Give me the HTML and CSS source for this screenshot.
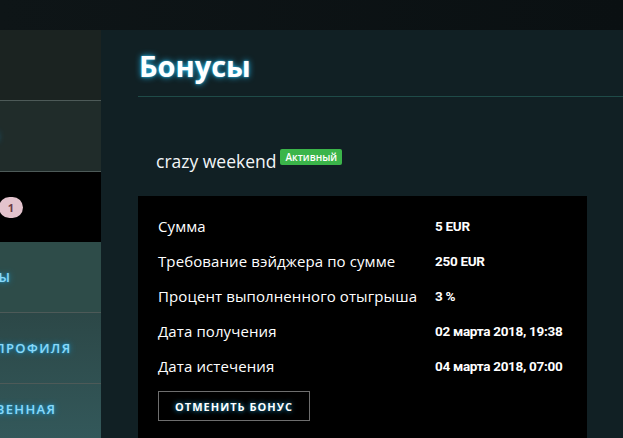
FILE: index.html
```html
<!DOCTYPE html>
<html lang="ru">
<head>
  <meta charset="UTF-8">
  <meta name="viewport" content="width=device-width, initial-scale=1.0">
  <title>Бонусы</title>
  <link rel="stylesheet" href="styles.css">
</head>
<body>
  <div class="topbar"></div>
  <div class="layout">
    <!-- Side menu (partly off screen) -->
    <div class="sidebar">
      <div class="sidebar-inner">
        <div class="side-item side-top"></div>
        <div class="side-item side-dim"><span class="side-link">ИГРЫ</span></div>
        <div class="side-item side-active">
          <span class="side-link">ПОЧТА</span>
          <span class="count">1</span>
        </div>
        <div class="side-item side-plain"><span class="side-link">БОНУСЫ</span></div>
        <div class="side-item side-profile"><span class="side-link">НАСТРОЙКИ ПРОФИЛЯ</span></div>
        <div class="side-item side-last"><span class="side-link">ОТВЕТСТВЕННАЯ</span></div>
      </div>
    </div>

    <!-- Main content -->
    <div class="main">
      <div class="page-head">
        <h1>Бонусы</h1>
      </div>

      <div class="bonus-name">
        crazy weekend<span class="status">Активный</span>
      </div>

      <div class="bonus-box">
        <div class="bonus-row">
          <div class="bonus-label">Сумма</div>
          <div class="bonus-value">5 EUR</div>
        </div>
        <div class="bonus-row">
          <div class="bonus-label">Требование вэйджера по сумме</div>
          <div class="bonus-value">250 EUR</div>
        </div>
        <div class="bonus-row">
          <div class="bonus-label">Процент выполненного отыгрыша</div>
          <div class="bonus-value">3 %</div>
        </div>
        <div class="bonus-row">
          <div class="bonus-label">Дата получения</div>
          <div class="bonus-value">02 марта 2018, 19:38</div>
        </div>
        <div class="bonus-row">
          <div class="bonus-label">Дата истечения</div>
          <div class="bonus-value">04 марта 2018, 07:00</div>
        </div>
        <button class="cancel-btn">Отменить бонус</button>
      </div>
    </div>
  </div>
</body>
</html>
```

FILE: styles.css
```css
body {
  margin: 0;
  height: 100vh;
  overflow: hidden;
  background-color: #0b1113;
  font-family: "Open Sans", sans-serif;
  color: #fff;
}
.topbar {
  height: 30px;
  background: linear-gradient(to right, #0e1517, #0a1012);
}
.layout {
  display: flex;
  height: 408px;
}

/* Sidebar */
.sidebar {
  width: 101px;
  overflow: hidden;
  flex-shrink: 0;
  background: linear-gradient(to bottom, #1b2321 0%, #243532 35%, #33585a 100%);
}
.sidebar-inner {
  width: 244px;
  margin-left: -143px;
}
.side-item {
  height: 70px;
  box-sizing: border-box;
  display: flex;
  align-items: center;
  justify-content: center;
  border-bottom: 1px solid #4d5a58;
  text-align: center;
}
.side-top {
  height: 71px;
  background-color: #1b2321;
}
.side-dim {
  height: 71px;
  background-color: #202c2a;
}
.side-active {
  background-color: #000;
  border-bottom: none;
  gap: 6px;
  padding-left: 6px;
}
.side-plain {
  height: 71px;
  background-color: #2e4c49;
}
.side-profile {
  height: 71px;
  padding-left: 10px;
}
.side-last {
  border-bottom: none;
  align-items: flex-start;
  padding: 16px 0 0 28px;
}
.side-link {
  font-family: "Open Sans", sans-serif;
  font-size: 13px;
  font-weight: 600;
  line-height: 19px;
  letter-spacing: 1.4px;
  color: #8ad8f8;
  text-shadow: 0 0 6px #168fc4, 0 0 2px #1f9bd0;
}
.side-active .side-link {
  color: #000;
  text-shadow: none;
}
.count {
  display: inline-block;
  padding: 2px 9px;
  border-radius: 11px;
  background-color: #e3c3cd;
  color: #6b3b45;
  font-size: 11px;
  font-weight: 700;
  line-height: 17px;
}

/* Main */
.main {
  flex: 1;
  background-color: #112024;
  padding-left: 37px;
}
.page-head {
  border-bottom: 1px solid #1f4b48;
  padding: 18px 0 12px 1px;
}
h1 {
  margin: 0;
  font-family: "Open Sans", sans-serif;
  font-size: 29px;
  line-height: 36px;
  font-weight: 700;
  color: #fff;
  text-shadow: 0 0 6px #22b6ea, 0 0 2px #3cc4f0;
}
.bonus-name {
  padding: 52px 0 0 18px;
  height: 47px;
  font-size: 17.5px;
  line-height: 20px;
  color: #f2f6f8;
}
.status {
  display: inline-block;
  vertical-align: 7px;
  margin-left: 4px;
  padding: 0 5px;
  height: 16px;
  line-height: 16px;
  border-radius: 2px;
  background-color: #3bb54a;
  color: #fff;
  font-size: 10px;
  font-weight: 600;
}
.bonus-box {
  width: 449px;
  box-sizing: border-box;
  background-color: #000;
  padding: 12px 20px 20px;
  height: 260px;
}
.bonus-row {
  display: grid;
  grid-template-columns: 277px auto;
  align-items: center;
  height: 35px;
}
.bonus-label {
  font-size: 15px;
  letter-spacing: 0.1px;
  color: #fff;
}
.bonus-value {
  font-family: Roboto, sans-serif;
  font-size: 13.5px;
  font-weight: 700;
  letter-spacing: -0.3px;
  color: #fff;
}
.cancel-btn {
  margin-top: 8px;
  width: 152px;
  height: 30px;
  background-color: transparent;
  border: 1px solid #6e6e6e;
  color: #fff;
  font-family: "Open Sans", sans-serif;
  font-size: 11px;
  font-weight: 700;
  letter-spacing: 1px;
  text-transform: uppercase;
  text-shadow: 0 0 5px #1aa3d9;
  cursor: pointer;
}
```
